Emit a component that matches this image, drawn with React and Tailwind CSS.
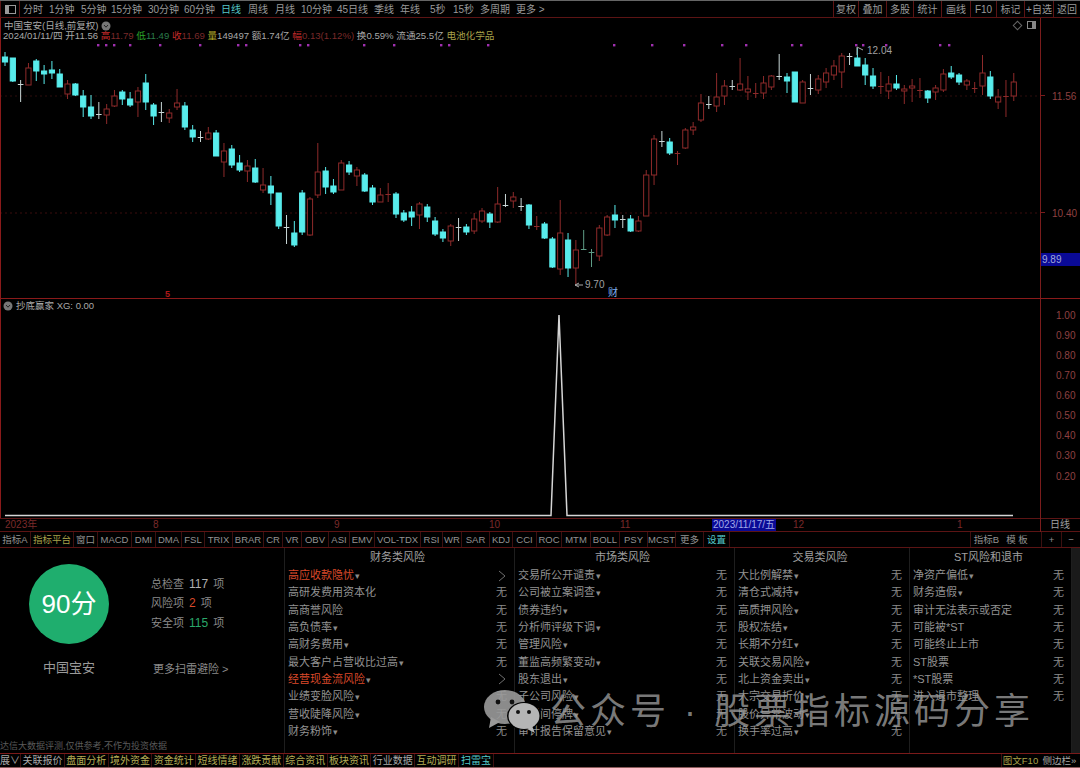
import React from 'react'

const FONT = '"Liberation Sans", "Noto Sans CJK SC", sans-serif'

// wickTop, bodyTop, bodyBottom, wickBottom, colour
const CANDLES = [
  [52, 57, 62, 66, 'c'], [58, 58, 81, 82, 'c'], [80, 84, 85, 102, 'w'], [63, 68, 85, 85, 'r'], [59, 61, 71, 81, 'c'],
  [65, 71, 74, 84, 'c'], [61, 70, 73, 79, 'c'], [69, 74, 87, 87, 'c'], [80, 84, 94, 99, 'r'], [83, 84, 95, 96, 'c'],
  [90, 96, 107, 117, 'c'], [95, 107, 116, 119, 'c'], [102, 114, 115, 119, 'w'], [104, 109, 115, 124, 'r'], [90, 96, 106, 107, 'r'],
  [90, 92, 99, 105, 'c'], [92, 99, 105, 107, 'c'], [87, 91, 102, 117, 'r'], [74, 83, 102, 110, 'c'], [103, 105, 116, 125, 'c'],
  [102, 112, 113, 122, 'w'], [109, 113, 118, 123, 'r'], [89, 103, 107, 110, 'r'], [102, 106, 127, 130, 'c'], [125, 130, 137, 142, 'c'],
  [131, 137, 138, 142, 'w'], [127, 133, 139, 140, 'r'], [130, 133, 156, 156, 'c'], [143, 151, 162, 177, 'r'], [145, 149, 165, 168, 'c'],
  [155, 163, 170, 172, 'c'], [160, 166, 171, 182, 'r'], [159, 168, 182, 183, 'c'], [168, 185, 190, 193, 'r'], [176, 186, 193, 205, 'c'],
  [193, 193, 226, 229, 'c'], [215, 227, 228, 244, 'w'], [221, 233, 245, 247, 'c'], [190, 193, 232, 235, 'c'], [197, 199, 235, 236, 'r'],
  [143, 172, 195, 198, 'r'], [167, 171, 187, 194, 'c'], [179, 186, 192, 194, 'c'], [160, 163, 190, 190, 'r'], [161, 165, 172, 175, 'c'],
  [167, 170, 176, 186, 'r'], [173, 175, 191, 192, 'c'], [185, 188, 202, 205, 'c'], [188, 195, 202, 202, 'r'], [183, 194, 195, 202, 'r'],
  [192, 194, 214, 218, 'c'], [210, 213, 220, 222, 'c'], [206, 212, 217, 226, 'c'], [202, 204, 215, 229, 'r'], [204, 207, 217, 222, 'c'],
  [217, 221, 234, 236, 'c'], [229, 232, 238, 242, 'c'], [224, 226, 241, 246, 'r'], [218, 227, 228, 241, 'w'], [224, 227, 232, 235, 'c'],
  [213, 219, 231, 234, 'r'], [208, 211, 221, 223, 'r'], [212, 214, 222, 228, 'c'], [187, 204, 222, 223, 'r'], [194, 205, 206, 207, 'w'],
  [192, 197, 201, 208, 'r'], [198, 206, 207, 211, 'w'], [204, 205, 225, 229, 'c'], [216, 226, 227, 230, 'r'], [222, 224, 238, 239, 'c'],
  [237, 239, 267, 268, 'c'], [200, 233, 269, 275, 'r'], [233, 240, 268, 277, 'c'], [240, 250, 268, 284, 'r'], [230, 249, 250, 250, 'g'],
  [249, 252, 253, 267, 'g'], [225, 228, 256, 261, 'r'], [215, 217, 235, 236, 'r'], [205, 215, 220, 228, 'c'], [215, 219, 220, 228, 'w'],
  [215, 219, 231, 232, 'c'], [216, 221, 231, 232, 'r'], [170, 175, 216, 216, 'r'], [135, 139, 175, 185, 'r'], [131, 141, 142, 147, 'w'],
  [138, 142, 153, 155, 'c'], [151, 153, 154, 165, 'r'], [128, 130, 148, 149, 'r'], [122, 127, 130, 135, 'r'], [94, 103, 120, 122, 'r'],
  [96, 104, 105, 109, 'w'], [73, 97, 106, 112, 'r'], [80, 86, 96, 105, 'r'], [80, 86, 87, 90, 'w'], [58, 84, 90, 91, 'r'],
  [76, 89, 92, 100, 'r'], [83, 93, 94, 98, 'r'], [76, 83, 93, 99, 'r'], [75, 76, 87, 90, 'r'], [54, 76, 77, 80, 'w'],
  [73, 77, 81, 93, 'c'], [72, 72, 102, 102, 'c'], [80, 82, 103, 103, 'r'], [74, 88, 89, 95, 'w'], [75, 79, 90, 94, 'r'],
  [68, 73, 82, 88, 'r'], [60, 66, 75, 80, 'r'], [53, 56, 72, 88, 'r'], [53, 56, 57, 65, 'w'], [48, 58, 66, 66, 'c'],
  [58, 65, 75, 85, 'c'], [68, 76, 86, 89, 'c'], [72, 86, 87, 94, 'r'], [76, 84, 91, 99, 'r'], [75, 84, 88, 90, 'c'],
  [85, 89, 91, 104, 'r'], [79, 86, 88, 102, 'r'], [78, 90, 91, 98, 'r'], [90, 91, 98, 103, 'c'], [85, 88, 92, 100, 'r'],
  [69, 74, 90, 92, 'r'], [66, 73, 77, 79, 'c'], [73, 75, 82, 85, 'c'], [79, 81, 85, 90, 'r'], [82, 88, 89, 93, 'r'],
  [55, 73, 86, 95, 'r'], [71, 77, 96, 99, 'c'], [89, 97, 102, 109, 'r'], [80, 96, 97, 117, 'r'], [73, 82, 96, 101, 'r'],
]

const DOTS = [98, 106, 114, 130, 160, 200, 238, 246, 300, 308, 364, 394, 441, 449, 488, 614, 652, 684, 722, 746, 792, 801, 856, 863, 886, 940, 949]

const PERIODS = [
  ['分时', 'w-[26px]'], ['1分钟', 'w-[32px]'], ['5分钟', 'w-[30px]'], ['15分钟', 'w-[37px]'], ['30分钟', 'w-[36px]'], ['60分钟', 'w-[37px]'],
  ['日线', 'w-[27px]'], ['周线', 'w-[27px]'], ['月线', 'w-[26px]'], ['10分钟', 'w-[36px]'], ['45日线', 'w-[37px]'], ['季线', 'w-[26px]'],
  ['年线', 'w-[30px]'], ['5秒', 'w-[23px]'], ['15秒', 'w-[27px]'], ['多周期', 'w-[36px]'], ['更多 >', 'w-[34px]'],
]
const TOOLS = [['复权', 'w-[25px]'], ['叠加', 'w-[28px]'], ['多股', 'w-[27px]'], ['统计', 'w-[28px]'], ['画线', 'w-[29px]'], ['F10', 'w-[26px]'], ['标记', 'w-[28px]'], ['+自选', 'w-[29px]'], ['返回', 'w-[27px]']]

const INDICATORS = [
  ['窗口', 'w-[24px]'], ['MACD', 'w-[34px]'], ['DMI', 'w-[24px]'], ['DMA', 'w-[26px]'], ['FSL', 'w-[23px]'], ['TRIX', 'w-[28px]'],
  ['BRAR', 'w-[31px]'], ['CR', 'w-[19px]'], ['VR', 'w-[19px]'], ['OBV', 'w-[27px]'], ['ASI', 'w-[21px]'], ['EMV', 'w-[25px]'],
  ['VOL-TDX', 'w-[46px]'], ['RSI', 'w-[22px]'], ['WR', 'w-[19px]'], ['SAR', 'w-[28px]'], ['KDJ', 'w-[23px]'], ['CCI', 'w-[24px]'],
  ['ROC', 'w-[25px]'], ['MTM', 'w-[29px]'], ['BOLL', 'w-[29px]'], ['PSY', 'w-[28px]'], ['MCST', 'w-[28px]'], ['更多', 'w-[28px]'],
]

const AXIS = [['1.00', 316], ['0.90', 336], ['0.80', 356], ['0.70', 376], ['0.60', 396], ['0.50', 416], ['0.40', 436], ['0.30', 456], ['0.20', 477]]

const COLUMNS = [
  {
    title: '财务类风险', width: 'w-[230px]',
    rows: [['高应收款隐忧', 1, 1], ['高研发费用资本化', 0], ['高商誉风险', 0], ['高负债率', 1], ['高财务费用', 1], ['最大客户占营收比过高', 1], ['经营现金流风险', 1, 1], ['业绩变脸风险', 1], ['营收陡降风险', 1], ['财务粉饰', 1]],
  },
  {
    title: '市场类风险', width: 'w-[220px]',
    rows: [['交易所公开谴责', 1], ['公司被立案调查', 1], ['债券违约', 1], ['分析师评级下调', 1], ['管理风险', 1], ['董监高频繁变动', 1], ['股东退出', 1], ['子公司风险', 1], ['长时间停牌', 1], ['审计报告保留意见', 1]],
  },
  {
    title: '交易类风险', width: 'w-[175px]',
    rows: [['大比例解禁', 1], ['清仓式减持', 1], ['高质押风险', 1], ['股权冻结', 1], ['长期不分红', 1], ['关联交易风险', 1], ['北上资金卖出', 1], ['大宗交易折价', 1], ['股价异常波动', 1], ['换手率过高', 1]],
  },
  {
    title: 'ST风险和退市', width: 'w-[162px]',
    rows: [['净资产偏低', 1], ['财务造假', 1], ['审计无法表示或否定', 0], ['可能被*ST', 0], ['可能终止上市', 0], ['ST股票', 0], ['*ST股票', 0], ['进入退市整理', 0]],
  },
]

const BOTTOM_TABS = [
  ['关联报价', 'text-[#a8a8a8]', 'w-[43.8px]'], ['盘面分析', 'text-[#b5ad55]', 'w-[43.8px]'], ['境外资金', 'text-[#b5ad55]', 'w-[43.8px]'], ['资金统计', 'text-[#b5ad55]', 'w-[43.8px]'],
  ['短线情绪', 'text-[#b5ad55]', 'w-[43.8px]'], ['涨跌贡献', 'text-[#b5ad55]', 'w-[43.8px]'], ['综合资讯', 'text-[#b5ad55]', 'w-[43.8px]'], ['板块资讯', 'text-[#b5ad55]', 'w-[43.8px]'],
  ['行业数据', 'text-[#a8a8a8]', 'w-[43.8px]'], ['互动调研', 'text-[#b5ad55]', 'w-[43.8px]'], ['扫雷宝', 'text-[#53c8c8]', 'w-[35px]'],
]

function Candle({ c, i }) {
  const x = 5 + i * 7.82
  const [top, bodyTop, bodyBottom, bottom, kind] = c
  const color = { c: '#58ecec', r: '#8e2a2a', w: '#c9d6d6', g: '#5f9c86' }[kind]
  if (bodyBottom - bodyTop <= 1) {
    return (
      <g stroke={color} strokeWidth="1">
        <line x1={x} x2={x} y1={top} y2={bottom} />
        <line x1={x - 2.8} x2={x + 2.8} y1={bodyTop + 0.5} y2={bodyTop + 0.5} />
      </g>
    )
  }
  return (
    <g>
      <line x1={x} x2={x} y1={top} y2={bottom} stroke={color} strokeWidth="1" />
      <rect
        x={x - 2.6}
        y={bodyTop}
        width="5.2"
        height={bodyBottom - bodyTop}
        fill={kind === 'c' ? color : '#000'}
        stroke={color}
        strokeWidth="1"
      />
    </g>
  )
}

function CircleMark() {
  return (
    <svg width="10" height="10" viewBox="0 0 10 10" className="shrink-0">
      <circle cx="5" cy="5" r="4.5" fill="#777" />
      <path d="M3 4l2 2.2L7 4" stroke="#222" strokeWidth="1" fill="none" />
    </svg>
  )
}

function WeChat() {
  return (
    <svg width="58" height="46" viewBox="0 0 58 46" className="shrink-0">
      <ellipse cx="22" cy="18" rx="21" ry="17" fill="#9a9a9a" fillOpacity="0.9" />
      <path d="M8 28l-2 11 11-6z" fill="#9a9a9a" />
      <circle cx="15" cy="13" r="2.4" fill="#111" />
      <circle cx="29" cy="13" r="2.4" fill="#111" />
      <ellipse cx="41" cy="27" rx="17" ry="14" fill="#000" />
      <ellipse cx="41" cy="27" rx="15.5" ry="13" fill="#b5b5b5" />
      <path d="M49 37l3 7-8-4z" fill="#b5b5b5" />
      <circle cx="35" cy="23" r="2" fill="#111" />
      <circle cx="46" cy="23" r="2" fill="#111" />
    </svg>
  )
}

function RiskColumn({ col }) {
  return (
    <div className={`${col.width} shrink-0 border-r border-[#1e1e1e] pl-[3px] pr-[7px]`}>
      <div className="h-[19px] text-center text-[11px] leading-[19px] text-[#a0a0a0]">{col.title}</div>
      {col.rows.map(([label, arrow, hot]) => (
        <div key={label} className="flex h-[17.3px] items-center justify-between text-[11px] leading-none">
          <span className={hot ? 'text-[#d9492a]' : 'text-[#929292]'}>
            {label}
            {arrow ? <span className="ml-[1px] text-[9px] text-[#8a8a8a]">▾</span> : null}
          </span>
          {hot ? (
            <svg width="8" height="12" viewBox="0 0 8 12" className="mr-[1px]">
              <path d="M1 1l6 5-6 5" stroke="#6e6e6e" fill="none" />
            </svg>
          ) : (
            <span className="text-[#8a8a8a]">无</span>
          )}
        </div>
      ))}
    </div>
  )
}

export default function App() {
  return (
    <div className="relative flex h-[768px] w-[1080px] flex-col overflow-hidden bg-black" style={{ fontFamily: FONT }}>
      {/* top toolbar */}
      <div className="flex h-[18px] shrink-0 items-center border-t border-b border-t-[#666] border-b-[#5c1414] text-[10px] text-[#9a9a9a]">
        <div className="flex h-full w-[20px] items-center justify-center border-x border-[#5c1414]">
          <div className="flex h-[9px] w-[11px] border border-[#999]">
            <div className="w-[3px] bg-[#999]" />
          </div>
        </div>
        <div className="ml-[3px] flex flex-1">
          {PERIODS.map(([p, w]) => (
            <span key={p} className={`${w} whitespace-nowrap ${p === '日线' ? 'text-[#55c8c8]' : ''}`}>{p}</span>
          ))}
        </div>
        <div className="flex h-full">
          {TOOLS.map(([t, w]) => (
            <span key={t} className={`${w} flex items-center justify-center border-l border-[#5c1414]`}>{t}</span>
          ))}
        </div>
      </div>

      {/* price chart */}
      <div className="relative h-[281px] shrink-0 border-b border-[#8a1a1a]">
        <svg width="1040" height="280" viewBox="0 18 1040 280" className="block">
          <line x1="0" x2="1040" y1="96" y2="96" stroke="#2e0c0c" strokeDasharray="2 3" />
          <line x1="0" x2="1040" y1="213" y2="213" stroke="#3a0d0d" strokeDasharray="2 3" />
          {DOTS.map((x) => (
            <rect key={x} x={x - 1} y="44" width="2.4" height="2.4" fill="#a030b0" />
          ))}
          {CANDLES.map((c, i) => (
            <Candle key={i} c={c} i={i} />
          ))}
          <path d="M857 55V47l6 3" stroke="#aaa" fill="none" />
          <path d="M575 285l4-2m-4 2l4 2m-4-2h8" stroke="#aaa" fill="none" />
        </svg>
        <div className="absolute bottom-0 left-0 top-0 w-[1px] bg-[#8a1a1a]" />
        <div className="absolute bottom-0 left-[1040px] top-0 w-[1px] bg-[#7a1c1c]" />

        {/* legend */}
        <div className="absolute left-[4px] top-[1px] flex items-center gap-[3px] text-[9.5px] leading-[14px] text-[#a8a8a8]">
          中国宝安(日线,前复权)
          <CircleMark />
        </div>
        <div className="absolute left-[3px] top-[11px] whitespace-nowrap text-[9.6px] leading-[14px] text-[#a8a8a8]">
          2024/01/11/四 开11.56 <span className="text-[#c42a2a]">高</span><span className="text-[#7a2a2a]">11.79</span>
          {' '}<span className="text-[#2aa82a]">低</span><span className="text-[#2a7a4a]">11.49</span>
          {' '}<span className="text-[#c42a2a]">收</span><span className="text-[#7a2a2a]">11.69</span>
          {' '}<span className="text-[#b5ad2a]">量</span>149497 <span className="text-[#a8a8a8]">额</span>1.74亿
          {' '}<span className="text-[#c42a2a]">幅</span><span className="text-[#7a2a2a]">0.13(1.12%)</span>
          {' '}换0.59% 流通25.5亿 <span className="text-[#a8a04a]">电池化学品</span>
        </div>
        <div className="absolute left-[1014px] top-[3px] flex items-center gap-[6px] text-[#777]">
          <span className="h-[7px] w-[7px] rotate-45 border border-[#666]" />
          <span className="flex h-[8px] w-[9px] justify-end border border-[#888]"><span className="w-[3px] bg-[#888]" /></span>
        </div>

        {/* chart labels */}
        <span className="absolute left-[867px] top-[26px] text-[10px] leading-[14px] text-[#a0a0a0]">12.04</span>
        <span className="absolute left-[585px] top-[260px] text-[10px] leading-[14px] text-[#a0a0a0]">9.70</span>
        <span className="absolute left-[608px] top-[268px] text-[10px] leading-[14px] text-[#7fb0f0]">财</span>
        <span className="absolute left-[165px] top-[269px] text-[9px] leading-[14px] font-bold text-[#b01818]">5</span>

        {/* price axis */}
        <span className="absolute left-[1040px] top-[77px] h-[1px] w-[5px] bg-[#7a1c1c]" />
        <span className="absolute left-[1052px] top-[72px] text-[10px] leading-[14px] text-[#8f4040]">11.56</span>
        <span className="absolute left-[1040px] top-[194px] h-[1px] w-[5px] bg-[#7a1c1c]" />
        <span className="absolute left-[1052px] top-[189px] text-[10px] leading-[14px] text-[#8f4040]">10.40</span>
        <span className="absolute left-[1041px] right-0 top-[235px] h-[13px] bg-[#0a0a96] pl-[1px] text-[10px] leading-[13px] text-[#a0a8d8]">9.89</span>
      </div>

      {/* indicator chart */}
      <div className="relative h-[219px] shrink-0">
        <svg width="1040" height="219" viewBox="0 299 1040 219" className="block">
          <path d="M5 515.5H551L559 315L567 515.5H1013" fill="none" stroke="#d5d5d5" strokeWidth="1.5" />
        </svg>
        <div className="absolute bottom-0 left-0 top-0 w-[1px] bg-[#8a1a1a]" />
        <div className="absolute bottom-0 left-[1040px] top-0 w-[1px] bg-[#7a1c1c]" />
        <div className="absolute left-[3px] top-[0px] flex items-center gap-[3px] text-[9.5px] leading-[14px] text-[#a8a8a8]">
          <CircleMark />
          抄底赢家 XG: 0.00
        </div>
        {AXIS.map(([label, y]) => (
          <span key={label} className="absolute left-[1056px] text-[10px] leading-[14px] text-[#8f4040]" style={{ top: y - 306 }}>
            {label}
          </span>
        ))}
      </div>

      {/* date axis */}
      <div className="relative h-[14px] shrink-0 border-y border-[#5c1414] text-[10px] leading-[12px] text-[#7a2a2a]">
        <span className="absolute left-[5px]">2023年</span>
        <span className="absolute left-[153px]">8</span>
        <span className="absolute left-[334px]">9</span>
        <span className="absolute left-[489px]">10</span>
        <span className="absolute left-[620px]">11</span>
        <span className="absolute left-[712px] bg-[#0a0a96] px-[1px] text-[#a0a8e8]">2023/11/17/五</span>
        <span className="absolute left-[793px]">12</span>
        <span className="absolute left-[957px]">1</span>
        <span className="absolute bottom-[-1px] left-[1040px] top-[-1px] w-[1px] bg-[#7a1c1c]" />
        <span className="absolute left-[1050px] text-[#a0a0a0]">日线</span>
      </div>

      {/* indicator tabs */}
      <div className="flex h-[16px] shrink-0 items-center border-b border-[#5c1414] text-[9.5px] leading-none text-[#929292]">
        <span className="flex h-full w-[31px] items-center justify-center border-r border-[#3c1010]">指标A</span>
        <span className="flex h-full w-[43px] items-center justify-center border-r border-[#3c1010] text-[#a8a04a]">指标平台</span>
        {INDICATORS.map(([t, w]) => (
          <span key={t} className={`${w} flex h-full items-center justify-center border-r border-[#3c1010]`}>{t}</span>
        ))}
        <span className="flex h-full w-[26px] items-center justify-center border-r border-[#3c1010] text-[#55c8c8]">设置</span>
        <span className="flex-1" />
        <span className="flex h-full w-[32px] items-center justify-center border-l border-[#3c1010]">指标B</span>
        <span className="flex h-full w-[39px] items-center justify-center pr-[9px]">模 板</span>
        <span className="flex h-full w-[20px] items-center justify-center border-l border-[#3c1010]">+</span>
        <span className="flex h-full w-[19px] items-center justify-center border-l border-[#3c1010]">−</span>
      </div>

      {/* risk panel */}
      <div className="flex flex-1">
        <div className="flex w-[285px] shrink-0 flex-col border-r border-[#1e1e1e]">
          <div className="flex flex-1">
            <div className="w-[138px] shrink-0 pl-[29px] pt-[16px]">
              <div className="flex h-[80px] w-[80px] items-center justify-center rounded-full bg-[#1fae6e] text-[26px] text-white">90分</div>
              <div className="mt-[14px] w-[80px] text-center text-[13px] leading-[20px] text-[#9a9a9a]">中国宝安</div>
            </div>
            <div className="pl-[13px] pt-[26px] text-[11px] text-[#8a8a8a]">
              <div className="flex h-[19.5px] items-center gap-[5px]">总检查 <span className="text-[12px] text-[#b0b0b0]">117</span> 项</div>
              <div className="flex h-[19.5px] items-center gap-[5px]">风险项 <span className="text-[12px] text-[#d9492a]">2</span> 项</div>
              <div className="flex h-[19.5px] items-center gap-[5px]">安全项 <span className="text-[12px] text-[#2aa86a]">115</span> 项</div>
              <div className="mt-[28px] pl-[2px] text-[11px] leading-[16px]">更多扫雷避险 &gt;</div>
            </div>
          </div>
          <div className="h-[14px] whitespace-nowrap text-[9px] leading-[14px] text-[#5a5a5a]">达信大数据评测,仅供参考,不作为投资依据</div>
        </div>
        {COLUMNS.map((col) => (
          <RiskColumn key={col.title} col={col} />
        ))}
        <div className="flex-1 bg-[#1a1a1a]" />
      </div>

      {/* bottom tabs */}
      <div className="flex h-[15px] shrink-0 items-center border-t border-b border-t-[#7a1a1a] border-b-[#8a5a5a] text-[10px] leading-none">
        <span className="flex h-full w-[21px] items-center border-r border-[#3c1010] text-[#a8a8a8]">展∨</span>
        {BOTTOM_TABS.map(([t, color, w]) => (
          <span key={t} className={`${color} ${w} flex h-full items-center justify-center border-r border-[#3c1010]`}>{t}</span>
        ))}
        <span className="flex-1" />
        <span className="flex h-full w-[38px] items-center justify-center whitespace-nowrap border-l border-[#3c1010] text-[9.5px] text-[#a8a04a]">图文F10</span>
        <span className="flex h-full w-[41px] items-center justify-center whitespace-nowrap text-[9.5px] text-[#a8a8a8]">侧边栏»</span>
      </div>

      {/* watermark */}
      <div className="pointer-events-none absolute left-[483px] top-[689px] flex items-center gap-[9px]">
        <WeChat />
        <span className="whitespace-pre text-[36px] leading-[46px] tracking-[4px] text-[#9a9a9a]/80">公众号 · 股票指标源码分享</span>
      </div>
    </div>
  )
}
